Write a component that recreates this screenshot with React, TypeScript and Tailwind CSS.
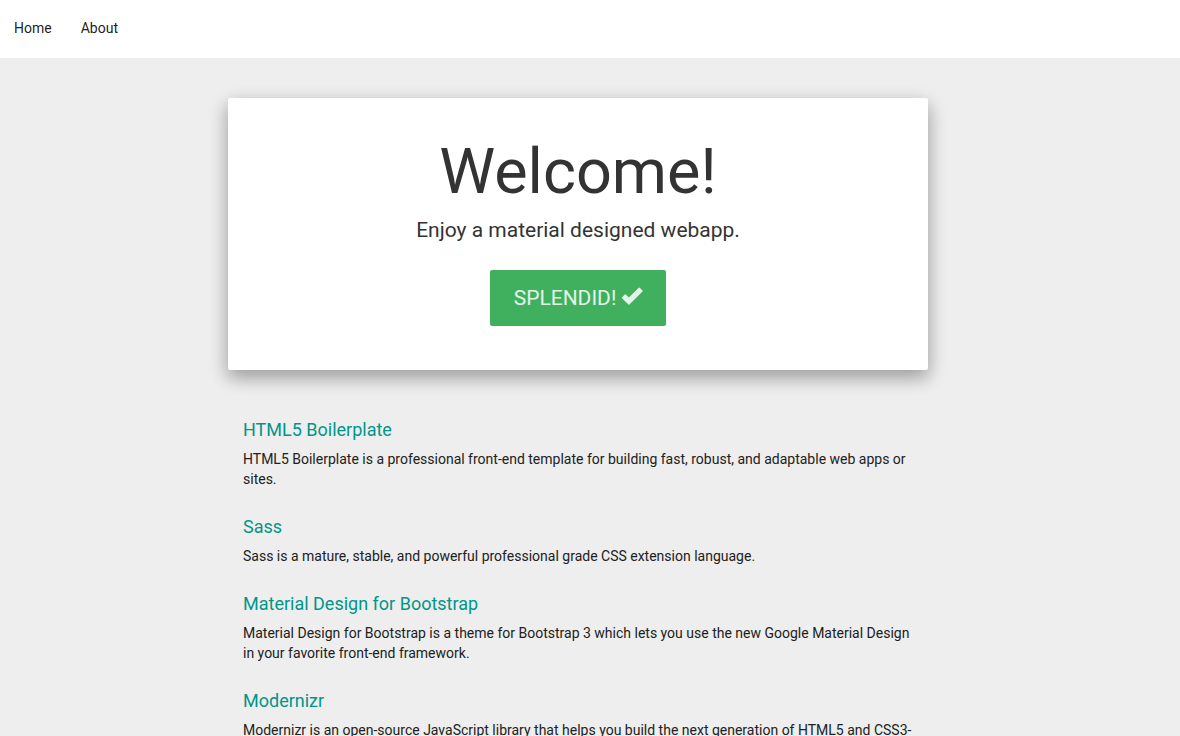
const features = [
  { title: "HTML5 Boilerplate", text: "HTML5 Boilerplate is a professional front-end template for building fast, robust, and adaptable web apps or sites." },
  { title: "Sass", text: "Sass is a mature, stable, and powerful professional grade CSS extension language." },
  { title: "Material Design for Bootstrap", text: "Material Design for Bootstrap is a theme for Bootstrap 3 which lets you use the new Google Material Design in your favorite front-end framework." },
  { title: "Modernizr", text: "Modernizr is an open-source JavaScript library that helps you build the next generation of HTML5 and CSS3-powered websites." },
];

function CheckIcon() {
  return (
    <svg viewBox="0 0 21 22" className="h-[22px] w-[21px] overflow-visible" fill="currentColor" aria-hidden="true">
      <path d="M17.7.7q.5-.5 1 0l2.8 2.8q.5.5 0 1L8.4 17.6q-.5.5-1 0L1 11.2q-.5-.5 0-1l2.8-2.8q.5-.5 1 0L7.9 10.5z" />
    </svg>
  );
}

export default function App() {
  return (
    <div className="min-h-screen bg-[#eeeeee] font-['Roboto',sans-serif] text-sm leading-5 text-[#212121]">
      <nav className="flex h-[58px] gap-[29px] bg-white px-3.5 pt-[18px] text-black/90">
        <a href="#home">Home</a>
        <a href="#about">About</a>
      </nav>
      <main className="mx-auto w-full max-w-[724px] pr-6 pt-10">
        <section className="flex flex-col items-center rounded-xs bg-white pb-11 pt-[39px] text-[#333333] shadow-[0_8px_17px_0_rgba(0,0,0,0.2),0_6px_20px_0_rgba(0,0,0,0.19)]">
          <h1 className="text-[63px] leading-[70px]">Welcome!</h1>
          <p className="mt-2 text-[21px] leading-[30px]">Enjoy a material designed webapp.</p>
          <button className="mt-[25px] flex h-14 items-center gap-[5px] rounded-xs bg-[#40b05f] px-6 text-[21px] uppercase text-white/85">
            Splendid!
            <CheckIcon />
          </button>
        </section>
        <section className="flex flex-col gap-7 px-[15px] pb-10 pt-[50px]">
          {features.map((feature) => (
            <article key={feature.title}>
              <h4 className="text-lg leading-5 text-[#009688]">{feature.title}</h4>
              <p className="mt-[9px]">{feature.text}</p>
            </article>
          ))}
        </section>
      </main>
    </div>
  );
}
